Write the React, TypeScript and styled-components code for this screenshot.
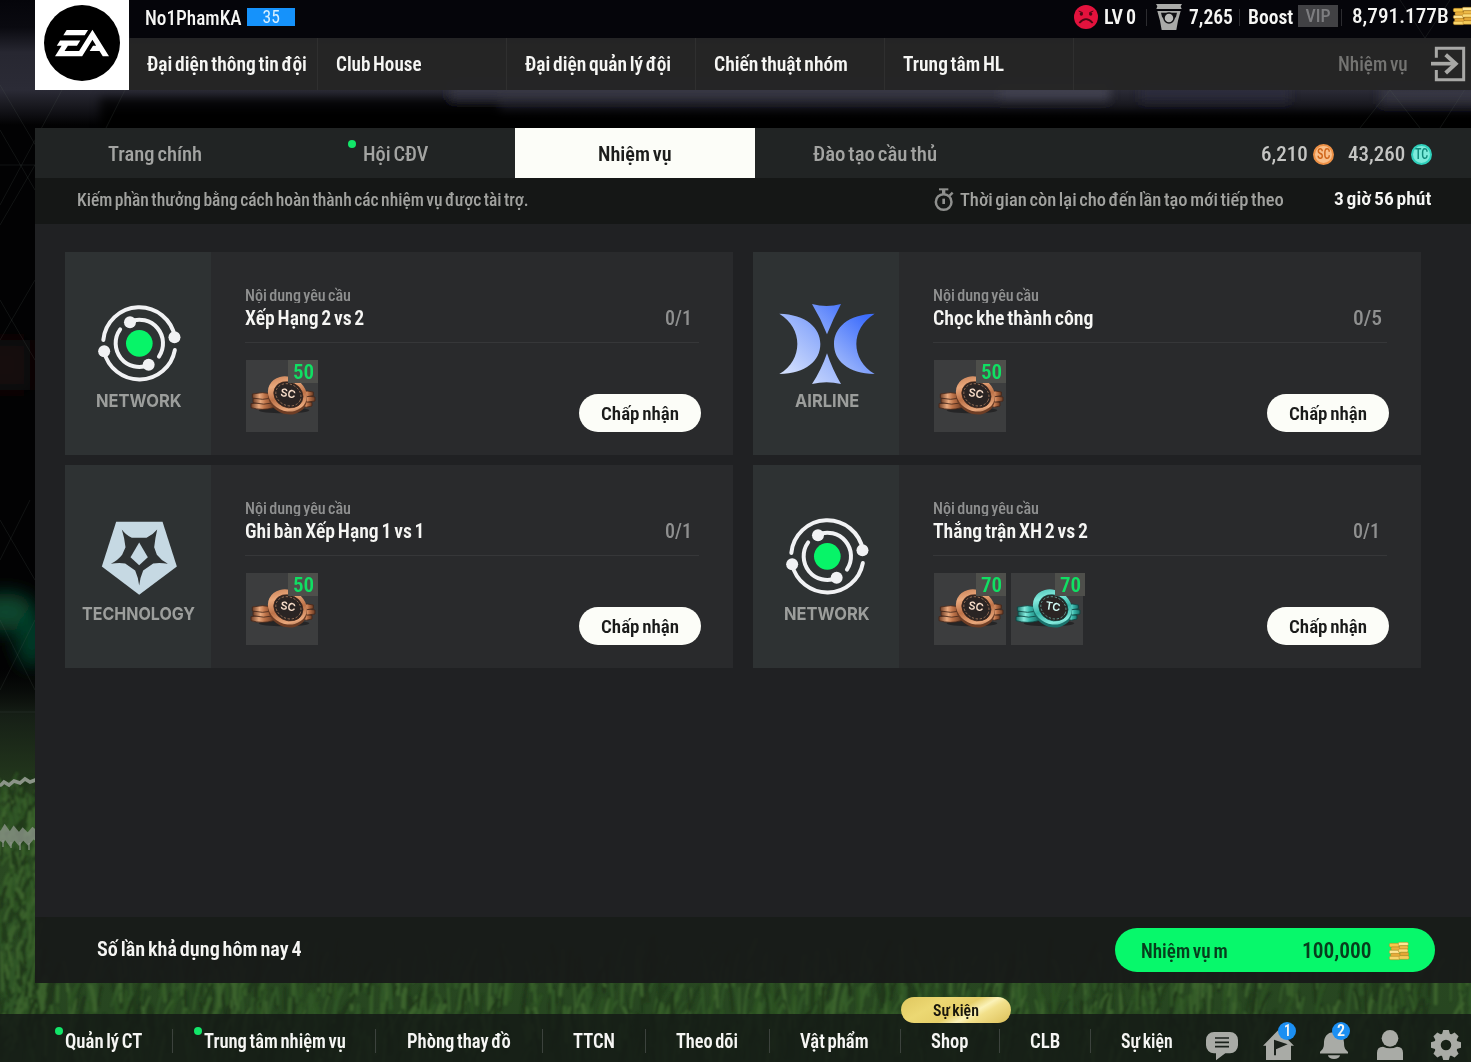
import React, { useLayoutEffect, useRef, useState } from "react";
import styled, { createGlobalStyle } from "styled-components";
import { SiEa } from "react-icons/si";

const GlobalStyle = createGlobalStyle`
  *, *::before, *::after { box-sizing: border-box; }
  html, body { margin: 0; padding: 0; background: #020203; }
  body { overflow: hidden; }
  button { border: 0; padding: 0; margin: 0; background: none; font: inherit; }
  svg { display: block; flex: none; overflow: visible; }
`;

/* ---------- condensed text ---------- */

const LabelBox = styled.span<{ $w: number; $lh?: number }>`
  display: block;
  flex: none;
  width: ${(p) => p.$w}px;
  line-height: ${(p) => p.$lh ?? 24}px;
  white-space: nowrap;
`;

const LabelText = styled.span<{ $size: number; $weight: number; $color: string; $wide?: boolean }>`
  display: inline-block;
  vertical-align: top;
  transform-origin: 0 50%;
  font-family: ${(p) =>
    p.$wide ? `Inter, "Liberation Sans", sans-serif` : `"Roboto Condensed", Roboto, "Liberation Sans", sans-serif`};
  font-stretch: ${(p) => (p.$wide ? "100%" : "75%")};
  font-size: ${(p) => p.$size}px;
  font-weight: ${(p) => p.$weight};
  word-spacing: -0.09em;
  color: ${(p) => p.$color};
`;

interface LabelProps {
  children: string;
  w: number;
  size?: number;
  weight?: number;
  color?: string;
  lh?: number;
  wide?: boolean;
}

/* Squeezes its text to the given width, as the game's condensed face does. */
function Label({ children, w, size = 20, weight = 600, color = "#f6f6f4", lh, wide }: LabelProps) {
  const ref = useRef<HTMLSpanElement>(null);
  const [scale, setScale] = useState(1);
  useLayoutEffect(() => {
    if (ref.current && ref.current.offsetWidth) setScale(w / ref.current.offsetWidth);
  }, [w, children]);
  return (
    <LabelBox $w={w} $lh={lh}>
      <LabelText
        ref={ref}
        $size={size}
        $weight={weight}
        $color={color}
        $wide={wide}
        style={{ transform: `scaleX(${scale})` }}
      >
        {children}
      </LabelText>
    </LabelBox>
  );
}

/* ---------- stadium backdrop ---------- */

const BackdropSvg = styled.svg`
  position: absolute;
  inset: 0;
  z-index: 0;
`;

function makeBlades() {
  let seed = 7;
  const rnd = () => {
    seed = (seed * 16807) % 2147483647;
    return seed / 2147483647;
  };
  const shades = ["#3f6d2f", "#2f5823", "#1c3517", "#4a7636", "#1a2d15", "#35602a"];
  const out: { d: string; c: string; w: number }[] = [];
  for (let i = 0; i < 1700; i++) {
    const side = i < 420;
    const x = side ? rnd() * 40 : rnd() * 1480;
    const y = side ? 790 + rnd() * 260 : 975 + rnd() * 95;
    const h = side ? 8 + rnd() * 14 : 14 + rnd() * 24;
    const lean = (rnd() - 0.35) * 16;
    out.push({
      d: `M${x.toFixed(1)} ${y.toFixed(1)}q${(lean * 0.2).toFixed(1)} ${(-h * 0.6).toFixed(1)} ${lean.toFixed(1)} ${(-h).toFixed(1)}`,
      c: shades[Math.floor(rnd() * shades.length)],
      w: 1.6 + rnd() * 2.8,
    });
  }
  return out;
}
const blades = makeBlades();

function Backdrop() {
  return (
    <BackdropSvg width="1471" height="1062" viewBox="0 0 1471 1062">
      <defs>
        <linearGradient id="pitch" x1="0" y1="0" x2="0" y2="1">
          <stop offset="0" stopColor="#0a0e0b" stopOpacity="0" />
          <stop offset=".12" stopColor="#161f16" />
          <stop offset=".28" stopColor="#22361c" />
          <stop offset=".37" stopColor="#2b4a22" />
          <stop offset="1" stopColor="#264520" />
        </linearGradient>
        <linearGradient id="stand" x1="0" y1="0" x2="0" y2="1">
          <stop offset="0" stopColor="#05050a" />
          <stop offset=".22" stopColor="#0a0a10" />
          <stop offset=".42" stopColor="#272731" />
          <stop offset=".72" stopColor="#2b2b36" />
          <stop offset="1" stopColor="#020203" />
        </linearGradient>
        <filter id="soft" x="-100%" y="-100%" width="300%" height="300%">
          <feGaussianBlur stdDeviation="9" />
        </filter>
        <filter id="softer" x="-20%" y="-150%" width="140%" height="400%">
          <feGaussianBlur stdDeviation="5" />
        </filter>
        <filter id="blade"><feGaussianBlur stdDeviation=".9" /></filter>
        <filter id="chalk"><feGaussianBlur stdDeviation=".7" /></filter>
      </defs>
      <rect width="1471" height="1062" fill="#020203" />
      <rect width="1471" height="125" fill="url(#stand)" />
      <rect x="130" width="1341" height="38" fill="#05050a" />
      <g filter="url(#softer)">
        <rect x="100" y="98" width="400" height="34" fill="#020204" opacity=".8" />
        <rect x="450" y="80" width="660" height="20" fill="#3d3d4a" opacity=".7" />
        <rect x="1000" y="84" width="110" height="16" fill="#4b4b5a" opacity=".5" />
        <rect x="1140" y="84" width="150" height="18" fill="#2f2f40" opacity=".6" />
        <rect x="1380" y="84" width="110" height="20" fill="#3a3a48" opacity=".7" />
        <rect x="100" y="112" width="1400" height="24" fill="#010102" />
      </g>
      <g filter="url(#soft)">
        <rect x="-20" y="340" width="50" height="50" fill="#140b10" />
        <ellipse cx="6" cy="612" rx="30" ry="19" fill="#07472f" />
        <ellipse cx="32" cy="640" rx="16" ry="28" fill="#053a28" />
      </g>
      <rect y="668" width="1471" height="394" fill="url(#pitch)" />
      <g filter="url(#blade)" fill="none" strokeLinecap="round" opacity=".6">
        {blades.map((b, i) => (
          <path key={i} d={b.d} stroke={b.c} strokeWidth={b.w} />
        ))}
      </g>
      <g filter="url(#chalk)" fill="none" stroke="#8b9488">
        <path d="M-4 786l5-1 3-3 5 3 5-4 6 2 5-4 5 3 8-3" strokeWidth="3.500" />
        <path d="M-4 833l6 4 3-5 5 7 4-6 5 6 4-5 5 5 5-6 6 5" strokeWidth="9" opacity=".8" />
        <path d="M3 840v7M11 842v6M20 842v8M29 843v7" strokeWidth="2" opacity=".6" />
      </g>
      <g stroke="#55605a" strokeWidth="1" opacity=".2" fill="none">
        <path d="M0 85L62 190M62 90L0 205M24 0V0M62 90L100 30M125 90L75 190M0 225L35 165M0 130L35 190M0 165H35M0 340L35 280M0 300L35 360M0 520L35 580M0 620L35 690M0 690L35 620M0 712H35M0 560L30 500M1360 128L1390 90L1420 128M1440 128L1471 80M1400 0L1425 38L1450 0" />
      </g>
    </BackdropSvg>
  );
}

/* ---------- icons ---------- */

const SadFace = () => (
  <svg width="24" height="24" viewBox="0 0 72 72">
    <circle cx="36" cy="36" r="36" fill="#e3123d" />
    <ellipse cx="22" cy="27" rx="5" ry="5.500" fill="#4a0714" />
    <ellipse cx="50" cy="27" rx="5" ry="5.500" fill="#4a0714" />
    <path d="M14 18l12 5M58 18l-12 5" stroke="#4a0714" strokeWidth="3" />
    <path d="M16 54q20-23 40 0" fill="none" stroke="#4a0714" strokeWidth="5.500" />
  </svg>
);

const Cup = () => (
  <svg width="26" height="26" viewBox="0 0 78 78">
    <path d="M0 0h78l-4 7 3 8H1l3-8z" fill="#a9aaa8" />
    <path d="M4 21h70l-8 29-5 28H17l-5-28z" fill="#a9aaa8" />
    <path d="M15 26h48l-3 12a24 22 0 0 1-42 0z" fill="#111114" />
    <circle cx="39" cy="42" r="15" fill="#b9bab8" stroke="#111114" strokeWidth="4.500" />
  </svg>
);

const GoldCoins = () => (
  <svg width="21" height="18" viewBox="0 0 63 54">
    <g stroke="#b98120" strokeWidth="1.500">
      <rect x="1" y="4" width="30" height="11" rx="4" fill="#f7c84a" />
      <rect x="6" y="15" width="28" height="10" rx="4" fill="#e9b03c" />
      <rect x="1" y="25" width="30" height="10" rx="4" fill="#ffe694" />
      <rect x="5" y="34" width="28" height="10" rx="4" fill="#e7ac3b" />
      <rect x="1" y="43" width="32" height="10" rx="4" fill="#f9d56a" />
      <rect x="28" y="1" width="30" height="10" rx="4" fill="#ffe896" />
      <rect x="31" y="11" width="26" height="10" rx="4" fill="#eebb48" />
      <rect x="28" y="21" width="29" height="10" rx="4" fill="#fbdc7a" />
      <rect x="33" y="31" width="26" height="10" rx="4" fill="#e3a736" />
      <rect x="30" y="41" width="30" height="11" rx="4" fill="#f5cb58" />
    </g>
  </svg>
);

const ExitIcon = () => (
  <svg width="34" height="34" viewBox="0 0 102 102" fill="none" stroke="#a8a8a6">
    <path d="M16 32V4h82v94H16V69" strokeWidth="9" />
    <path d="M0 50h76" strokeWidth="11" />
    <path d="M44 23l30 27-30 28" strokeWidth="12" />
  </svg>
);

const Stopwatch = () => (
  <svg width="20" height="24" viewBox="0 0 60 72" fill="none" stroke="#8f908e">
    <circle cx="29" cy="42" r="23.500" strokeWidth="7.500" />
    <path d="M15 4h28" strokeWidth="6" />
    <path d="M29 4v15" strokeWidth="10" />
    <path d="M47 23l9-9" strokeWidth="7" />
    <path d="M29 32v16" strokeWidth="8" />
  </svg>
);

const NetworkLogo = () => (
  <svg width="85.300" height="78.700" viewBox="107 179 256 236">
    <g fill="none" stroke="#f1f2f4" strokeWidth="12" strokeLinecap="round">
      <path d="M129 284A108.500 108.500 0 0 1 344 276" />
      <path d="M343.600 314A108.500 108.500 0 0 1 131.200 318" />
      <path d="M208.200 229.100A71 71 0 0 1 295.900 333.700" />
      <path d="M265.400 359A71 71 0 0 1 179.500 252.300" />
    </g>
    <g fill="#f1f2f4">
      <circle cx="342.500" cy="276" r="18" />
      <circle cx="131.500" cy="318" r="18" />
      <circle cx="209" cy="231" r="18" />
      <circle cx="265" cy="358" r="18" />
    </g>
    <circle cx="237" cy="294" r="40" fill="#07f468" />
  </svg>
);

const AirlineLogo = () => (
  <svg width="98" height="82" viewBox="84 174 294 246">
    <defs>
      <linearGradient id="air" gradientUnits="userSpaceOnUse" x1="120" y1="400" x2="320" y2="190">
        <stop offset="0" stopColor="#d3dffd" />
        <stop offset=".5" stopColor="#93affb" />
        <stop offset="1" stopColor="#3d6dfc" />
      </linearGradient>
    </defs>
    <g fill="url(#air)">
      <path d="M186 177Q230 189 273 177Q250 220 231 268Q212 220 186 177Z" />
      <path d="M186 417Q230 406 273 417Q248 375 231 325Q214 375 186 417Z" />
      <path d="M88 206C168 208 211 248 211 297C211 347 168 386 88 387C124 366 142 332 142 297C142 262 124 228 88 206Z" />
      <path d="M374 206C294 208 252 248 252 297C252 347 294 386 374 387C338 366 319 332 319 297C319 262 338 228 374 206Z" />
    </g>
  </svg>
);

const TechLogo = () => (
  <svg width="77.700" height="75.700" viewBox="120.500 177.500 233 227">
    <path d="M169 186H308L351 320L238 405L126 320Z" fill="#c6d9e3" />
    <path
      d="M186 209Q198 226 216 234H260Q278 226 292 209Q286 234 283 262L291 285Q304 302 324 312Q300 308 280 311L250 332Q241 352 238 377Q235 352 226 332L196 311Q176 308 153 312Q174 302 187 285L197 262Q194 234 186 209Z"
      fill="#2e3233"
    />
    <path d="M238 248L264 292L238 316L212 292Z" fill="#c6d9e3" />
  </svg>
);

const CoinWord = styled.text`
  font-family: Inter, "Liberation Sans", sans-serif;
  font-weight: 600;
`;

type Currency = "SC" | "TC";

const metal = {
  SC: { hi: "#e9a87c", mid: "#bd7248", lo: "#6d3d25", edge: "#43261a", word: "#f7ddc9" },
  TC: { hi: "#84ebdd", mid: "#38b5a9", lo: "#1a726c", edge: "#0f4340", word: "#d2fbf5" },
};

function CoinPile({ kind }: { kind: Currency }) {
  const m = metal[kind];
  const id = `rim${kind}`;
  return (
    <svg width="72" height="72" viewBox="558 345 216 216">
      <defs>
        <linearGradient id={id} x1="0" y1="0" x2="1" y2="1">
          <stop offset="0" stopColor={m.mid} />
          <stop offset=".3" stopColor={m.hi} />
          <stop offset=".55" stopColor={m.mid} />
          <stop offset=".8" stopColor={m.hi} />
          <stop offset="1" stopColor={m.lo} />
        </linearGradient>
        <linearGradient id={`${id}s`} x1="0" y1="0" x2="1" y2="0">
          <stop offset="0" stopColor={m.lo} />
          <stop offset=".35" stopColor={m.hi} />
          <stop offset=".6" stopColor={m.mid} />
          <stop offset="1" stopColor={m.lo} />
        </linearGradient>
      </defs>
      <ellipse cx="672" cy="496" rx="76" ry="9" fill="#252526" />
      <g fill={`url(#${id}s)`} stroke={m.edge} strokeWidth="2.500">
        <path d="M573 476q34-7 68 0v12q-34 10-68 0z" />
        <path d="M579 461q32-7 64 0v12q-32 9-64 0z" />
        <path d="M577 447q30-8 62 0v12q-32 8-62 0z" />
        <path d="M722 472q18-5 34 0v11q-16 7-34 0z" />
        <path d="M722 456q22-5 43 0v12q-22 6-43 0z" />
        <path d="M722 441q20-6 38 0v11q-18 6-38 0z" />
      </g>
      <g transform="rotate(26 682 449)">
        <ellipse cx="685" cy="455" rx="60" ry="51" fill={m.lo} />
        <ellipse cx="681" cy="447" rx="60" ry="51" fill={`url(#${id})`} />
        <ellipse cx="685" cy="448" rx="45" ry="38" fill="#2a2423" stroke={m.edge} strokeWidth="2" />
        <ellipse cx="685" cy="448" rx="39" ry="32" fill="none" stroke={m.hi} strokeWidth="2" strokeDasharray="7 5" opacity=".75" />
      </g>
      <CoinWord x="684" y="457" textAnchor="middle" fontSize="33" fill={m.word} transform="rotate(9 684 446)">
        {kind}
      </CoinWord>
    </svg>
  );
}

const TokenDisc = styled.span<{ $kind: Currency }>`
  width: 21px;
  height: 21px;
  flex: none;
  border-radius: 50%;
  display: flex;
  justify-content: center;
  align-items: center;
  background: ${(p) => (p.$kind === "SC" ? "#f9bf8a" : "#7cebdb")};
  border: 2px solid ${(p) => (p.$kind === "SC" ? "#ee9146" : "#2fd0bb")};
`;

const ChatIcon = () => (
  <svg width="32" height="28" viewBox="378 366 96 84">
    <path d="M402 366h48a24 24 0 0 1 24 24v16a24 24 0 0 1-24 24h-14l-28 21v-21h-6a24 24 0 0 1-24-24v-16a24 24 0 0 1 24-24z" fill="#a9aba6" />
    <path d="M405 384h42M405 397h42M405 410h42" stroke="#1a211b" strokeWidth="5" />
  </svg>
);

const HouseIcon = () => (
  <svg width="31" height="30" viewBox="549 360 93 90">
    <path d="M595 360L642 407H633V450H558V407H549Z" fill="#a9aba6" />
    <path d="M582 389L623 403L588 418V436H582Z" fill="#1a211b" />
  </svg>
);

const BellIcon = () => (
  <svg width="28" height="28" viewBox="720 366 85 84">
    <path d="M762 366c21 0 31 15 31 34 0 15 5 20 12 26v5H720v-5c7-6 12-11 12-26 0-19 9-34 30-34z" fill="#a9aba6" />
    <path d="M744 436h37a19 15 0 0 1-37 0z" fill="#a9aba6" />
  </svg>
);

const PersonIcon = () => (
  <svg width="26" height="30" viewBox="891 360 78 90">
    <circle cx="930" cy="385" r="25" fill="#a9aba6" />
    <path d="M891 450v-22q0-18 18-18q21 10 42 0q18 0 18 18v22z" fill="#a9aba6" />
  </svg>
);

const GearIcon = () => (
  <svg width="30" height="30" viewBox="-15 -15 30 30">
    <circle r="8.500" fill="none" stroke="#a9aba6" strokeWidth="6.500" />
    {[0, 45, 90, 135, 180, 225, 270, 315].map((a) => (
      <path key={a} d="M-4.200 -10L-2.800 -15H2.800L4.200 -10Z" fill="#a9aba6" transform={`rotate(${a})`} />
    ))}
  </svg>
);

/* ---------- frame ---------- */

const Screen = styled.div`
  position: relative;
  width: 1471px;
  height: 1062px;
  overflow: hidden;
`;

const Layout = styled.div`
  position: relative;
  z-index: 1;
  height: 100%;
  display: flex;
  flex-direction: column;
`;

const Header = styled.header`
  display: flex;
  height: 90px;
  padding-left: 35px;
`;

const LogoPlate = styled.div`
  width: 94px;
  height: 90px;
  padding: 0 0 4px 0;
  background: #fff;
  display: flex;
  align-items: center;
  justify-content: center;
`;

const LogoDisc = styled.div`
  width: 76px;
  height: 76px;
  border-radius: 50%;
  background: #000;
  color: #fff;
  display: flex;
  align-items: center;
  justify-content: center;
`;

const HeaderMain = styled.div`
  flex: 1;
  min-width: 0;
`;

const StatusRow = styled.div`
  height: 38px;
  padding: 0 0 4px 16px;
  display: flex;
  align-items: center;
`;

const PlayerName = styled.div`
  padding-top: 1px;
`;

const LevelTag = styled.div`
  width: 48px;
  height: 18px;
  margin-left: 5px;
  background: #1592fb;
  display: flex;
  align-items: center;
  justify-content: center;
`;

const Stats = styled.div`
  margin-left: auto;
  width: 397px;
  flex: none;
  display: flex;
  align-items: center;
`;

const Balance = styled.div`
  display: flex;
  align-items: center;
  gap: 4px;
  padding-bottom: 2px;
`;

const Space = styled.i<{ $w: number }>`
  flex: none;
  width: ${(p) => p.$w}px;
`;

const StatRule = styled.i`
  flex: none;
  width: 1px;
  height: 17px;
  background: #2c2c30;
`;

const VipTag = styled.div`
  width: 40px;
  height: 22px;
  margin-bottom: 2px;
  flex: none;
  background: #414144;
  display: flex;
  align-items: center;
  justify-content: center;
`;

const MainNav = styled.nav`
  height: 52px;
  display: flex;
  align-items: center;
  background: rgba(37, 37, 37, 0.97);
`;

const NavCell = styled.a`
  width: 189px;
  height: 52px;
  flex: none;
  padding-left: 18px;
  display: flex;
  align-items: center;
  border-right: 1px solid #2f2f2f;
`;

const NavEnd = styled.div`
  flex: 1;
  padding-right: 6px;
  display: flex;
  justify-content: flex-end;
  align-items: center;
  gap: 23px;
`;

const Panel = styled.main`
  margin: 38px 0 0 35px;
  height: 855px;
  display: flex;
  flex-direction: column;
`;

const Tabs = styled.div`
  height: 50px;
  display: flex;
  align-items: center;
  background: rgba(34, 37, 37, 0.97);
`;

const Tab = styled.a<{ $active?: boolean }>`
  width: 240px;
  height: 50px;
  padding-top: 1px;
  display: flex;
  align-items: center;
  justify-content: center;
  background: ${(p) => (p.$active ? "#fcfdf8" : "transparent")};
`;

const Dotted = styled.span`
  position: relative;
`;

const Dot = styled.i<{ $x: number; $y: number }>`
  position: absolute;
  left: ${(p) => p.$x}px;
  top: ${(p) => p.$y}px;
  width: 8px;
  height: 8px;
  border-radius: 50%;
  background: #12e669;
`;

const Wallet = styled.div`
  margin-left: auto;
  padding: 2px 39px 0 0;
  display: flex;
  align-items: center;
`;

const InfoRow = styled.div`
  height: 46px;
  padding: 0 40px 2px 42px;
  display: flex;
  align-items: center;
  background: rgba(21, 23, 22, 0.98);
`;

const InfoTime = styled.div`
  margin-left: auto;
  display: flex;
  align-items: center;
`;

const Remaining = styled.div`
  padding-bottom: 2px;
`;

const Board = styled.section`
  flex: 1;
  padding: 28px 0 0 30px;
  display: grid;
  grid-template-columns: 668px 668px;
  grid-auto-rows: 203px;
  gap: 10px 20px;
  background: #202123;
`;

const PanelFoot = styled.footer`
  height: 66px;
  padding: 0 36px 0 62px;
  display: flex;
  align-items: center;
  justify-content: space-between;
  background: rgba(23, 25, 24, 0.94);
`;

const FootNote = styled.div`
  padding-bottom: 2px;
`;

const RefreshButton = styled.button`
  width: 320px;
  height: 44px;
  padding: 1px 24px 0 26px;
  border-radius: 22px;
  display: flex;
  align-items: center;
  background: #07f86b;
`;

/* ---------- mission cards ---------- */

const Card = styled.article`
  display: flex;
  background: #292a2c;
`;

const Brand = styled.div`
  width: 146px;
  padding: 51px 0 0 1px;
  display: flex;
  flex-direction: column;
  align-items: center;
  background: #2e3233;
`;

const BrandMark = styled.div`
  height: 82px;
  margin-bottom: 5px;
  padding-left: 1px;
  display: flex;
  align-items: center;
`;

const CardBody = styled.div`
  flex: 1;
  padding: 34px 32px 0 34px;
`;

const Caption = styled.div`
  height: 17px;
  overflow: hidden;
`;

const TitleRow = styled.div`
  height: 39px;
  padding: 3px 9px 0 0;
  display: flex;
  justify-content: space-between;
`;

const Progress = styled.div`
  width: 27px;
`;

const Divider = styled.hr`
  height: 1px;
  margin: 0 2px 0 0;
  border: 0;
  background: #363739;
`;

const CardActions = styled.div`
  margin-top: 17px;
  padding-left: 1px;
  display: flex;
  align-items: flex-end;
  gap: 5px;
`;

const Tile = styled.div`
  position: relative;
  width: 72px;
  height: 72px;
  background: #3c3d3e;
`;

const TileCount = styled.div<{ $shift: number }>`
  position: absolute;
  top: 0;
  right: ${(p) => -p.$shift}px;
  width: 30px;
  height: 23px;
  padding-left: 5px;
  background: #4e4f4b;
`;

const AcceptButton = styled.button`
  width: 122px;
  height: 38px;
  padding-top: 1px;
  margin-left: auto;
  border-radius: 19px;
  display: flex;
  align-items: center;
  justify-content: center;
  background: #fcfdf8;
`;

/* ---------- bottom bar ---------- */

const BottomBar = styled.nav`
  height: 48px;
  margin-top: auto;
  display: flex;
  background: rgba(21, 26, 22, 0.87);
`;

const BottomCell = styled.a<{ $w: number; $pad: number; $last?: boolean }>`
  position: relative;
  flex: none;
  width: ${(p) => p.$w}px;
  padding: 16px 0 0 ${(p) => p.$pad}px;
  &::after {
    content: "";
    position: absolute;
    right: -1px;
    top: 15px;
    width: 1px;
    height: 24px;
    background: ${(p) => (p.$last ? "transparent" : "#3c423d")};
  }
`;

const EventPill = styled.div`
  position: absolute;
  left: 1px;
  top: -17px;
  width: 110px;
  height: 26px;
  padding-top: 1px;
  border-radius: 13px;
  display: flex;
  align-items: center;
  justify-content: center;
  background: linear-gradient(150deg, #e0c75f 0%, #ecd873 30%, #e6cf68 52%, #fbf2b8 64%, #f2e08a 72%, #dcbf58 100%);
`;

const Tray = styled.div`
  flex: 1;
  display: flex;
  align-items: flex-end;
  padding: 0 10px 2px 0;
  justify-content: flex-end;
`;

const TrayItem = styled.div<{ $gap: number }>`
  position: relative;
  margin-left: ${(p) => p.$gap}px;
`;

const Badge = styled.div<{ $x: number; $y: number }>`
  position: absolute;
  left: ${(p) => p.$x}px;
  top: ${(p) => p.$y}px;
  width: 18px;
  height: 18px;
  border-radius: 50%;
  display: flex;
  align-items: center;
  justify-content: center;
  background: #1b8ff2;
`;

/* ---------- data ---------- */

const navItems: [string, number][] = [
  ["Đại diện thông tin đội", 160],
  ["Club House", 86],
  ["Đại diện quản lý đội", 146],
  ["Chiến thuật nhóm", 134],
  ["Trung tâm HL", 101],
];

const brands = {
  network: { name: "NETWORK", w: 86, mark: <NetworkLogo /> },
  airline: { name: "AIRLINE", w: 64, mark: <AirlineLogo /> },
  technology: { name: "TECHNOLOGY", w: 113, mark: <TechLogo /> },
};

interface Mission {
  brand: keyof typeof brands;
  title: string;
  titleW: number;
  progress: string;
  rewards: { kind: Currency; count: string }[];
}

const missions: Mission[] = [
  { brand: "network", title: "Xếp Hạng 2 vs 2", titleW: 119, progress: "0/1", rewards: [{ kind: "SC", count: "50" }] },
  { brand: "airline", title: "Chọc khe thành công", titleW: 161, progress: "0/5", rewards: [{ kind: "SC", count: "50" }] },
  { brand: "technology", title: "Ghi bàn Xếp Hạng 1 vs 1", titleW: 179, progress: "0/1", rewards: [{ kind: "SC", count: "50" }] },
  {
    brand: "network",
    title: "Thắng trận XH 2 vs 2",
    titleW: 155,
    progress: "0/1",
    rewards: [
      { kind: "SC", count: "70" },
      { kind: "TC", count: "70" },
    ],
  },
];

const bottomItems: { text: string; w: number; cell: number; pad: number; dot?: boolean; event?: boolean }[] = [
  { text: "Quản lý CT", w: 77, cell: 172, pad: 65, dot: true },
  { text: "Trung tâm nhiệm vụ", w: 142, cell: 203, pad: 32, dot: true },
  { text: "Phòng thay đồ", w: 104, cell: 167, pad: 32 },
  { text: "TTCN", w: 42, cell: 103, pad: 31 },
  { text: "Theo dõi", w: 62, cell: 124, pad: 31 },
  { text: "Vật phẩm", w: 69, cell: 131, pad: 31 },
  { text: "Shop", w: 37, cell: 99, pad: 31, event: true },
  { text: "CLB", w: 30, cell: 91, pad: 31 },
  { text: "Sự kiện", w: 52, cell: 100, pad: 31 },
];

function MissionCard({ m }: { m: Mission }) {
  const b = brands[m.brand];
  return (
    <Card>
      <Brand>
        <BrandMark>{b.mark}</BrandMark>
        <Label w={b.w} size={18} weight={750} color="#9c9e9c" lh={22} wide>
          {b.name}
        </Label>
      </Brand>
      <CardBody>
        <Caption>
          <Label w={106} size={16} weight={550} color="#8f9090" lh={20}>
            Nội dung yêu cầu
          </Label>
        </Caption>
        <TitleRow>
          <Label w={m.titleW}>{m.title}</Label>
          <Progress>
            <Label w={m.progress === "0/5" ? 29 : 27} size={20} weight={550} color="#8f9090">
              {m.progress}
            </Label>
          </Progress>
        </TitleRow>
        <Divider />
        <CardActions>
          {m.rewards.map((r, i) => (
            <Tile key={r.kind}>
              <CoinPile kind={r.kind} />
              <TileCount $shift={i * 2}>
                <Label w={21} size={21} color="#10df63" lh={24}>
                  {r.count}
                </Label>
              </TileCount>
            </Tile>
          ))}
          <AcceptButton>
            <Label w={78} size={19} color="#1a1b1a">
              Chấp nhận
            </Label>
          </AcceptButton>
        </CardActions>
      </CardBody>
    </Card>
  );
}

export default function App() {
  return (
    <>
      <GlobalStyle />
      <Screen>
        <Backdrop />
        <Layout>
          <Header>
            <LogoPlate>
              <LogoDisc>
                <SiEa size={54} />
              </LogoDisc>
            </LogoPlate>
            <HeaderMain>
              <StatusRow>
                <PlayerName>
                  <Label w={97} size={20} weight={550}>No1PhamKA</Label>
                </PlayerName>
                <LevelTag>
                  <Label w={17} size={17.5} weight={450} color="#d8f0ff" lh={18}>35</Label>
                </LevelTag>
                <Stats>
                  <SadFace />
                  <Space $w={6} />
                  <Label w={32} size={20} weight={600}>LV 0</Label>
                  <Space $w={10} />
                  <StatRule />
                  <Space $w={9} />
                  <Cup />
                  <Space $w={7} />
                  <Label w={44} size={20} weight={600}>7,265</Label>
                  <Space $w={6} />
                  <StatRule />
                  <Space $w={8} />
                  <Label w={45} size={20} weight={600}>Boost</Label>
                  <Space $w={5} />
                  <VipTag>
                    <Label w={25} size={18} weight={550} color="#7d7d80" lh={22}>VIP</Label>
                  </VipTag>
                  <Space $w={3} />
                  <StatRule />
                  <Space $w={10} />
                  <Balance>
                    <Label w={97} size={21} weight={550}>8,791.177B</Label>
                    <GoldCoins />
                  </Balance>
                </Stats>
              </StatusRow>
              <MainNav>
                {navItems.map(([text, w]) => (
                  <NavCell key={text}>
                    <Label w={w}>{text}</Label>
                  </NavCell>
                ))}
                <NavEnd>
                  <Label w={70} weight={550} color="#747472">Nhiệm vụ</Label>
                  <ExitIcon />
                </NavEnd>
              </MainNav>
            </HeaderMain>
          </Header>

          <Panel>
            <Tabs>
              <Tab>
                <Label w={94} size={21} weight={550} color="#a3a4a2">Trang chính</Label>
              </Tab>
              <Tab>
                <Dotted>
                  <Label w={65} size={21} weight={550} color="#a3a4a2">Hội CĐV</Label>
                  <Dot $x={-15} $y={-2} />
                </Dotted>
              </Tab>
              <Tab $active>
                <Label w={74} size={21} color="#1c1d1c">Nhiệm vụ</Label>
              </Tab>
              <Tab>
                <Label w={124} size={21} weight={550} color="#a3a4a2">Đào tạo cầu thủ</Label>
              </Tab>
              <Wallet>
                <Label w={47} size={21} weight={550} color="#c4c5c3">6,210</Label>
                <Space $w={5} />
                <TokenDisc $kind="SC">
                  <Label w={13} size={15} weight={500} color="#cf6418" lh={17}>SC</Label>
                </TokenDisc>
                <Space $w={14} />
                <Label w={57} size={21} weight={550} color="#c4c5c3">43,260</Label>
                <Space $w={6} />
                <TokenDisc $kind="TC">
                  <Label w={13} size={15} weight={500} color="#128a7b" lh={17}>TC</Label>
                </TokenDisc>
              </Wallet>
            </Tabs>
            <InfoRow>
              <Label w={452} size={17.5} weight={550} color="#a1a29f">
                Kiếm phần thưởng bằng cách hoàn thành các nhiệm vụ được tài trợ.
              </Label>
              <InfoTime>
                <Stopwatch />
                <Space $w={6} />
                <Label w={324} size={18.5} weight={550} color="#a1a29f">
                  Thời gian còn lại cho đến lần tạo mới tiếp theo
                </Label>
                <Space $w={50} />
                <Remaining>
                  <Label w={97} size={19}>3 giờ 56 phút</Label>
                </Remaining>
              </InfoTime>
            </InfoRow>
            <Board>
              {missions.map((m, i) => (
                <MissionCard key={i} m={m} />
              ))}
            </Board>
            <PanelFoot>
              <FootNote>
                <Label w={205} size={20.5}>Số lần khả dụng hôm nay 4</Label>
              </FootNote>
              <RefreshButton>
                <Label w={87} size={20} color="#073d1d">Nhiệm vụ m</Label>
                <Space $w={74} />
                <Label w={70} size={22} color="#073d1d">100,000</Label>
                <Space $w={17} />
                <GoldCoins />
              </RefreshButton>
            </PanelFoot>
          </Panel>

          <BottomBar>
            {bottomItems.map((it, i) => (
              <BottomCell key={it.text} $w={it.cell} $pad={it.pad} $last={i === bottomItems.length - 1}>
                <Dotted as="div">
                  <Label w={it.w} size={19.5}>{it.text}</Label>
                  {it.dot && <Dot $x={-10} $y={-3} />}
                </Dotted>
                {it.event && (
                  <EventPill>
                    <Label w={46} size={16.5} color="#17150c">Sự kiện</Label>
                  </EventPill>
                )}
              </BottomCell>
            ))}
            <Tray>
              <TrayItem $gap={0}><ChatIcon /></TrayItem>
              <TrayItem $gap={25}>
                <HouseIcon />
                <Badge $x={15} $y={-8}><Label w={7} size={16} lh={18}>1</Label></Badge>
              </TrayItem>
              <TrayItem $gap={26}>
                <BellIcon />
                <Badge $x={12} $y={-10}><Label w={8} size={16} lh={18}>2</Label></Badge>
              </TrayItem>
              <TrayItem $gap={29}><PersonIcon /></TrayItem>
              <TrayItem $gap={28}><GearIcon /></TrayItem>
            </Tray>
          </BottomBar>
        </Layout>
      </Screen>
    </>
  );
}
